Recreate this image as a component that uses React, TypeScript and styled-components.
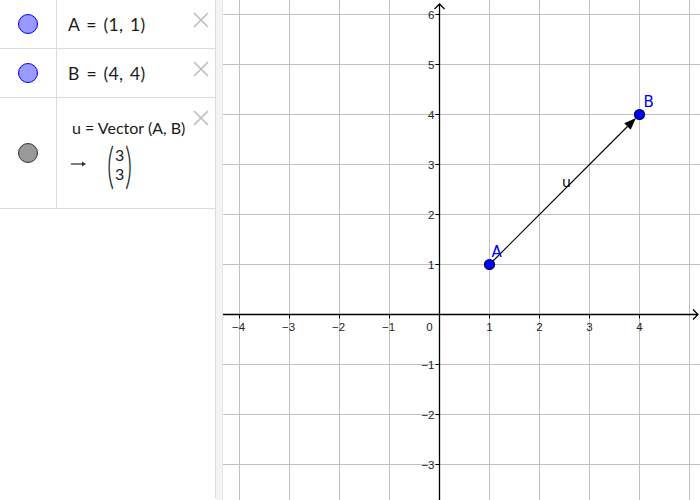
import styled, { createGlobalStyle } from "styled-components";

const Global = createGlobalStyle`
  html, body { margin: 0; padding: 0; background: #fff; }
  body { width: 700px; height: 500px; overflow: hidden; font-family: Lato, "Noto Sans", sans-serif; }
`;

const Layout = styled.div`
  display: flex;
  width: 700px;
  height: 500px;
`;

const AlgebraPanel = styled.div`
  width: 216px;
  flex: none;
  border-right: 1px solid #dcdcdc;
  box-sizing: border-box;
  height: 498px;
  display: flex;
  flex-direction: column;
`;

const Splitter = styled.div`
  width: 6px;
  flex: none;
  background: #f3f3f3;
  border-right: 1px solid #e6e6e6;
`;

const Row = styled.div<{ $h: number }>`
  display: flex;
  height: ${(p) => p.$h}px;
  border-bottom: 1px solid #dcdcdc;
  position: relative;
`;

const Marble = styled.div`
  width: 56px;
  flex: none;
  border-right: 1px solid #dcdcdc;
  display: flex;
  align-items: center;
  justify-content: center;
`;

const Dot = styled.span<{ $fill: string; $stroke: string }>`
  width: 18px;
  height: 18px;
  border-radius: 50%;
  background: ${(p) => p.$fill};
  border: 1px solid ${(p) => p.$stroke};
`;

const Content = styled.div`
  flex: 1;
  padding: 0 0 0 11px;
  display: flex;
  flex-direction: column;
  justify-content: center;
  color: #1a1a1a;
  white-space: nowrap;
`;

const Expr = styled.div`
  font-size: 17.5px;
  word-spacing: 2px;
  letter-spacing: 0.3px;
  padding-top: 1px;
`;

const Def = styled.div`
  font-size: 16px;
  margin-left: 4px;
  margin-top: -2px;
`;

const Output = styled.div`
  display: flex;
  align-items: center;
  gap: 17px;
  margin-left: 3px;
  margin-top: 4px;
`;

const Matrix = styled.div`
  display: flex;
  align-items: center;
  font-size: 16px;
  line-height: 19px;
`;

const Paren = styled.span`
  font-size: 50px;
  font-weight: 300;
  line-height: 46px;
  transform: scaleX(0.55);
  color: #222;
`;

const Column = styled.div`
  display: flex;
  flex-direction: column;
  align-items: center;
  margin: 0 -2px;
`;

const Close = styled.span<{ $top: number }>`
  position: absolute;
  right: 5px;
  top: ${(p) => p.$top}px;
  width: 18px;
  height: 18px;
`;

const Graphics = styled.div`
  flex: 1;
  height: 500px;
`;

function CloseIcon() {
  return (
    <svg width="18" height="18" viewBox="0 0 18 18">
      <path d="M2 2 L16 16 M16 2 L2 16" stroke="#bdbdbd" strokeWidth="1.6" />
    </svg>
  );
}

const OX = 216.5;
const OY = 314.5;
const S = 50;

function Plane() {
  const xs = [-4, -3, -2, -1, 1, 2, 3, 4, 5];
  const ys = [-3, -2, -1, 1, 2, 3, 4, 5, 6];
  const ax = 1 * S + OX;
  const ay = OY - 1 * S;
  const bx = 4 * S + OX;
  const by = OY - 4 * S;
  const ang = Math.atan2(by - ay, bx - ax);
  const hl = 12;
  const hw = 4.5;
  const tx = bx - Math.cos(ang) * 5;
  const ty = by - Math.sin(ang) * 5;
  const bxh = tx - Math.cos(ang) * hl;
  const byh = ty - Math.sin(ang) * hl;
  const px = -Math.sin(ang) * hw;
  const py = Math.cos(ang) * hw;
  return (
    <svg width="477" height="500" viewBox="0 0 477 500" style={{ display: "block" }}>
      <g stroke="#c0c0c0" strokeWidth="1">
        {xs.map((x) => (
          <line key={"gx" + x} x1={OX + x * S} y1={0} x2={OX + x * S} y2={500} />
        ))}
        {ys.map((y) => (
          <line key={"gy" + y} x1={0} y1={OY - y * S} x2={477} y2={OY - y * S} />
        ))}
      </g>
      <g stroke="#000" strokeWidth="1.3" fill="none">
        <line x1={0} y1={OY} x2={475} y2={OY} />
        <line x1={OX} y1={500} x2={OX} y2={4} />
        <path d={`M${OX - 5} ${9} L${OX} ${4} L${OX + 5} ${9}`} />
        <path d={`M${470} ${OY - 5} L${475} ${OY} L${470} ${OY + 5}`} />
      </g>
      <g stroke="#000" strokeWidth="1">
        {xs.filter((x) => x < 5).map((x) => (
          <line key={"tx" + x} x1={OX + x * S} y1={OY} x2={OX + x * S} y2={OY + 4} />
        ))}
        {ys.map((y) => (
          <line key={"ty" + y} x1={OX - 4} y1={OY - y * S} x2={OX} y2={OY - y * S} />
        ))}
      </g>
      <g fontFamily="'Liberation Sans', Arial, sans-serif" fontSize="11.5" fill="#222">
        {xs.filter((x) => x < 5).map((x) => (
          <text key={"lx" + x} x={OX + x * S + (x < 0 ? -1 : 0)} y={OY + 16} textAnchor="middle">
            {x < 0 ? "−" + -x : x}
          </text>
        ))}
        <text x={OX - 10} y={OY + 16} textAnchor="middle">0</text>
        {ys.map((y) => (
          <text key={"ly" + y} x={OX - 5} y={OY - y * S + 4} textAnchor="end">
            {y < 0 ? "−" + -y : y}
          </text>
        ))}
      </g>
      <line x1={ax} y1={ay} x2={bxh} y2={byh} stroke="#000" strokeWidth="1.2" />
      <polygon
        points={`${tx},${ty} ${bxh + px},${byh + py} ${bxh - px},${byh - py}`}
        fill="#000"
      />
      <circle cx={ax} cy={ay} r={5} fill="#0000ff" stroke="#00005a" strokeWidth="1.2" />
      <circle cx={bx} cy={by} r={5} fill="#0000ff" stroke="#00005a" strokeWidth="1.2" />
      <g fontFamily="'DejaVu Sans', sans-serif" fontSize="15" fill="#0000ff">
        <text x={ax + 2} y={ay - 8}>A</text>
        <text x={bx + 4} y={by - 8}>B</text>
      </g>
      <text x={339} y={187} fontFamily="'DejaVu Sans', sans-serif" fontSize="14" fill="#000">u</text>
    </svg>
  );
}

export default function App() {
  return (
    <>
      <Global />
      <Layout>
        <AlgebraPanel>
          <Row $h={48}>
            <Marble>
              <Dot $fill="#9999ff" $stroke="#0000ff" />
            </Marble>
            <Content>
              <Expr>A = (1, 1)</Expr>
            </Content>
            <Close $top={11}>
              <CloseIcon />
            </Close>
          </Row>
          <Row $h={48}>
            <Marble>
              <Dot $fill="#9999ff" $stroke="#0000ff" />
            </Marble>
            <Content>
              <Expr>B = (4, 4)</Expr>
            </Content>
            <Close $top={11}>
              <CloseIcon />
            </Close>
          </Row>
          <Row $h={110}>
            <Marble>
              <Dot $fill="#999999" $stroke="#333333" />
            </Marble>
            <Content>
              <Def>u = Vector (A, B)</Def>
              <Output>
                <svg width="16" height="8" viewBox="0 0 16 8">
                  <path d="M0 4 H13" stroke="#333" strokeWidth="1.3" />
                  <path d="M11 1.5 L15 4 L11 6.5 Z" fill="#333" />
                </svg>
                <Matrix>
                  <Paren>(</Paren>
                  <Column>
                    <span>3</span>
                    <span>3</span>
                  </Column>
                  <Paren>)</Paren>
                </Matrix>
              </Output>
            </Content>
            <Close $top={11}>
              <CloseIcon />
            </Close>
          </Row>
        </AlgebraPanel>
        <Splitter />
        <Graphics>
          <Plane />
        </Graphics>
      </Layout>
    </>
  );
}
